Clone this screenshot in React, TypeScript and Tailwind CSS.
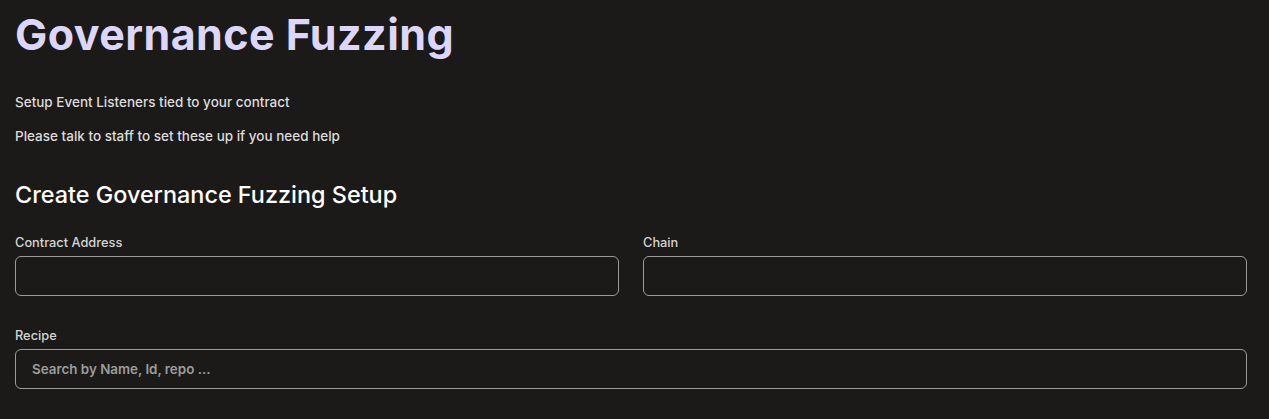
import React from "react";

export default function App() {
  return (
    <div className="min-h-[419px] w-full bg-[#1b1a19] pl-[15px] pr-[22px] pt-[6px] text-[#e0e0e0]" style={{ fontFamily: "Inter, 'Noto Sans', sans-serif" }}>
      <h1 className="text-[43px] font-bold leading-[56px] tracking-[0.01em] text-[#dcd6fb]">Governance Fuzzing</h1>
      <p className="mt-[32px] text-[13.5px] font-medium leading-[16px] text-[#dcdcdc]">Setup Event Listeners tied to your contract</p>
      <p className="mt-[18px] text-[13.5px] font-medium leading-[16px] text-[#dcdcdc]">Please talk to staff to set these up if you need help</p>
      <h2 className="mt-[36px] text-[23.4px] font-medium leading-[30px] text-white">Create Governance Fuzzing Setup</h2>
      <div className="mt-[25px] grid grid-cols-2 gap-x-[24px]">
        <div className="flex flex-col">
          <label className="text-[12.8px] font-medium leading-[16px] text-[#d4d4d4]">Contract Address</label>
          <input className="mt-[5px] h-[40px] rounded-[6px] border border-[#9b9b9b] bg-transparent px-4 outline-none" />
        </div>
        <div className="flex flex-col">
          <label className="text-[12.8px] font-medium leading-[16px] text-[#d4d4d4]">Chain</label>
          <input className="mt-[5px] h-[40px] rounded-[6px] border border-[#9b9b9b] bg-transparent px-4 outline-none" />
        </div>
      </div>
      <div className="mt-[32px] flex flex-col">
        <label className="text-[12.8px] font-medium leading-[16px] text-[#d4d4d4]">Recipe</label>
        <input
          placeholder="Search by Name, Id, repo ..."
          className="mt-[5px] h-[40px] rounded-[6px] border border-[#9b9b9b] bg-transparent px-4 text-[13.4px] font-semibold outline-none placeholder:text-[#9c9c9c]"
        />
      </div>
    </div>
  );
}
